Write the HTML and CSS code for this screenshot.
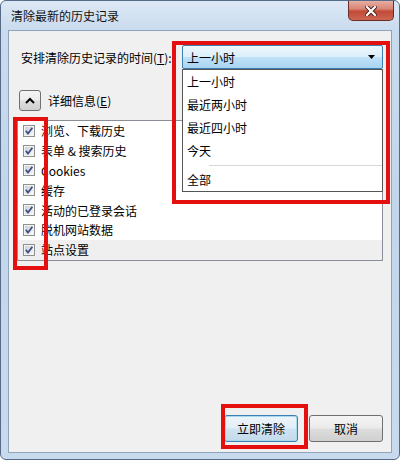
FILE: index.html
```html
<!DOCTYPE html>
<html lang="zh-CN">
<head>
<meta charset="utf-8">
<title>清除最新的历史记录</title>
<link rel="stylesheet" href="styles.css">
</head>
<body>
<svg class="defs" width="0" height="0" aria-hidden="true">
  <defs>
    <linearGradient id="cbfill" x1="0" y1="0" x2="1" y2="1">
      <stop offset="0" stop-color="#cbcfd5"/>
      <stop offset="1" stop-color="#f6f6f6"/>
    </linearGradient>
    <symbol id="chk" viewBox="0 0 12 12">
      <rect x="0.5" y="0.5" width="11" height="11" fill="#f4f4f4" stroke="#8e8f8f"/>
      <rect x="2" y="2" width="8" height="8" fill="url(#cbfill)"/>
      <path d="M2.8 5.8 L5 8.6 L9.4 2.8" fill="none" stroke="#3a4c86" stroke-width="1.7"/>
    </symbol>
  </defs>
</svg>
<div class="window">
  <div class="titlebar">
    <span class="title">清除最新的历史记录</span>
    <div class="close">
      <svg width="12" height="10" viewBox="0 0 12 10">
        <path d="M2 1 L10 9 M10 1 L2 9" stroke="#4a1c16" stroke-width="4" stroke-linecap="square"/>
        <path d="M2 1 L10 9 M10 1 L2 9" stroke="#ffffff" stroke-width="2.2" stroke-linecap="square"/>
      </svg>
    </div>
  </div>
  <div class="client">
    <div class="time-row">
      <span class="label">安排清除历史记录的时间(<u>T</u>):</span>
      <div class="combo">
        <span>上一小时</span>
        <svg class="arrow" width="7" height="4" viewBox="0 0 7 4"><polygon points="0,0 7,0 3.5,4" fill="#000"/></svg>
        <div class="combo-list">
          <div class="item">上一小时</div>
          <div class="item">最近两小时</div>
          <div class="item">最近四小时</div>
          <div class="item">今天</div>
          <div class="sep"></div>
          <div class="item">全部</div>
        </div>
      </div>
    </div>
    <div class="details-row">
      <div class="expand">
        <svg width="10" height="7" viewBox="0 0 10 7"><path d="M1 6 L5 2 L9 6" fill="none" stroke="#000" stroke-width="2"/></svg>
      </div>
      <span>详细信息(<u>E</u>)</span>
    </div>
    <div class="listbox">
      <div class="row"><svg class="cb" width="12" height="12"><use href="#chk"/></svg><span>浏览、下载历史</span></div>
      <div class="row"><svg class="cb" width="12" height="12"><use href="#chk"/></svg><span>表单 &amp; 搜索历史</span></div>
      <div class="row"><svg class="cb" width="12" height="12"><use href="#chk"/></svg><span>Cookies</span></div>
      <div class="row"><svg class="cb" width="12" height="12"><use href="#chk"/></svg><span>缓存</span></div>
      <div class="row"><svg class="cb" width="12" height="12"><use href="#chk"/></svg><span>活动的已登录会话</span></div>
      <div class="row"><svg class="cb" width="12" height="12"><use href="#chk"/></svg><span>脱机网站数据</span></div>
      <div class="row selected"><svg class="cb" width="12" height="12"><use href="#chk"/></svg><span>站点设置</span></div>
    </div>
    <div class="buttons">
      <button class="btn default">立即清除</button>
      <button class="btn">取消</button>
    </div>
  </div>
  <div class="mark mark-combo"></div>
  <div class="mark mark-checks"></div>
  <div class="mark mark-button"></div>
</div>
</body>
</html>
```
FILE: styles.css
```css
html, body {
  margin: 0;
  padding: 0;
  background: #ffffff;
}

body {
  font-family: "Noto Sans CJK SC", "Microsoft YaHei", sans-serif;
  font-size: 12px;
  color: #000;
}

.defs {
  position: absolute;
  width: 0;
  height: 0;
}

.window {
  position: relative;
  width: 400px;
  height: 460px;
  box-sizing: border-box;
  border: 1px solid #566b88;
  border-radius: 6px;
  background: linear-gradient(#dce8f5, #c9dbee 30px, #c2d5ea 200px, #c8daee);
  display: flex;
  flex-direction: column;
}

.titlebar {
  height: 29px;
  display: flex;
  align-items: flex-start;
  justify-content: space-between;
  padding: 0 5px 0 10px;
}

.title {
  line-height: 30px;
  font-size: 12px;
  color: #111;
}

.close {
  width: 46px;
  height: 20px;
  box-sizing: border-box;
  border: 1px solid #6b2c26;
  border-top: none;
  border-radius: 0 0 5px 5px;
  background: linear-gradient(#e6aea3, #d98677 40%, #c24a38 55%, #cc6652);
  display: flex;
  align-items: center;
  justify-content: center;
}

.client {
  flex: 1;
  margin: 0 7px 6px 7px;
  border: 1px solid #8fa3ba;
  background: #f0f0f0;
  display: flex;
  flex-direction: column;
}

.time-row {
  margin-top: 14px;
  padding: 0 8px 0 12px;
  display: flex;
  align-items: center;
  justify-content: space-between;
}

.label u, .details-row u {
  text-decoration: underline;
}

.combo {
  position: relative;
  width: 201px;
  height: 24px;
  box-sizing: border-box;
  border: 1px solid #3c7fb1;
  border-radius: 2px;
  background: linear-gradient(#eef7fd, #dceffb 48%, #c0e1f7 52%, #a9d4f2);
  display: flex;
  align-items: center;
  padding-left: 4px;
}

.arrow {
  margin-left: auto;
  margin-right: 7px;
}

.combo-list {
  position: absolute;
  top: 23px;
  left: -1px;
  width: 201px;
  box-sizing: border-box;
  border: 1px solid #555;
  background: #fff;
  z-index: 2;
}

.item {
  height: 23px;
  line-height: 23px;
  padding-left: 4px;
}

.sep {
  height: 1px;
  margin: 3px 0 2px 26px;
  background: #d7d7d7;
}

.details-row {
  margin-top: 21px;
  padding-left: 10px;
  display: flex;
  align-items: center;
  gap: 7px;
}

.expand {
  width: 22px;
  height: 21px;
  box-sizing: border-box;
  border: 1px solid #707070;
  border-radius: 3px;
  background: linear-gradient(#f4f4f4, #ebebeb 48%, #dddddd 52%, #cfcfcf);
  display: flex;
  align-items: center;
  justify-content: center;
}

.listbox {
  margin: 9px 8px 0 8px;
  border: 1px solid #8a8f97;
  background: #fff;
}

.row {
  height: 19.8px;
  display: flex;
  align-items: center;
  padding-left: 5px;
  gap: 6px;
}

.row.selected {
  background: #efefef;
}

.cb {
  flex: none;
}

.buttons {
  margin-top: auto;
  padding: 0 8px 10px 0;
  display: flex;
  justify-content: flex-end;
  gap: 11px;
}

.btn {
  width: 74px;
  height: 27px;
  box-sizing: border-box;
  border: 1px solid #707070;
  border-radius: 3px;
  background: linear-gradient(#f4f4f4, #ebebeb 48%, #dddddd 52%, #cfcfcf);
  font-family: "Noto Sans CJK SC", "Microsoft YaHei", sans-serif;
  font-size: 12px;
  color: #000;
  padding: 0;
}

.btn.default {
  border-color: #3c7fb1;
  background: linear-gradient(#eef5fa, #e1edf6 48%, #cfe3f1 52%, #c3dbec);
  box-shadow: inset 0 0 0 1px #a8d8f0;
}

.mark {
  position: absolute;
  box-sizing: border-box;
  border: 4px solid #e41010;
  z-index: 5;
}

.mark-combo {
  left: 171px;
  top: 40px;
  width: 218px;
  height: 163px;
}

.mark-checks {
  left: 12px;
  top: 116px;
  width: 35px;
  height: 153px;
}

.mark-button {
  left: 220px;
  top: 403px;
  width: 87px;
  height: 45px;
}
```
